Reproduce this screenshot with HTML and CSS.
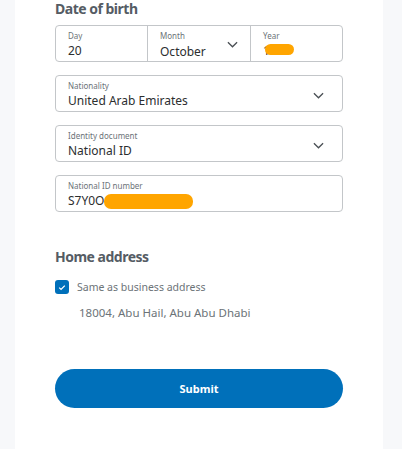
FILE: index.html
```html
<!DOCTYPE html>
<html lang="en">
<head>
  <meta charset="UTF-8" />
  <title>Personal details</title>
  <link rel="stylesheet" href="styles.css">
</head>
<body>
  <div class="card">
    <h3 class="section-title dob-title">Date of birth</h3>
    <div class="date-group">
      <div class="field date-day">
        <label>Day</label>
        <div class="value">20</div>
      </div>
      <div class="field date-month">
        <label>Month</label>
        <div class="value">October</div>
        <svg class="chevron" viewBox="0 0 12 7"><path d="M1 1l5 5 5-5" /></svg>
      </div>
      <div class="field date-year">
        <label>Year</label>
        <div class="value"><span class="digit">1</span><span class="mask mask-year"></span></div>
      </div>
    </div>

    <div class="field box">
      <label>Nationality</label>
      <div class="value">United Arab Emirates</div>
      <svg class="chevron" viewBox="0 0 12 7"><path d="M1 1l5 5 5-5" /></svg>
    </div>

    <div class="field box">
      <label>Identity document</label>
      <div class="value">National ID</div>
      <svg class="chevron" viewBox="0 0 12 7"><path d="M1 1l5 5 5-5" /></svg>
    </div>

    <div class="field box">
      <label>National ID number</label>
      <div class="value">S7Y0O<span class="mask mask-id"></span></div>
    </div>

    <h3 class="section-title home-title">Home address</h3>
    <div class="check-row">
      <span class="checkbox">
        <svg viewBox="0 0 10 8"><path d="M1.5 4.2l2.3 2.2L8.5 1.6" /></svg>
      </span>
      <span class="check-label">Same as business address</span>
    </div>
    <div class="address">18004, Abu Hail, Abu Abu Dhabi</div>

    <button class="submit">Submit</button>
  </div>
</body>
</html>
```

FILE: styles.css
```css
body {
  margin: 0;
  background: #f7f8fa;
  font-family: "Noto Sans", "Open Sans", sans-serif;
  color: #2c2e2f;
}
.card {
  background: white;
  margin: 0 19px 0 15px;
  padding: 0 40px 40px 40px;
  height: 449px;
  box-sizing: border-box;
}
.section-title {
  margin: 0;
  font-size: 14px;
  font-weight: 700;
  color: #555c64;
  letter-spacing: -0.5px;
}
.dob-title {
  line-height: 18px;
  margin-bottom: 7px;
}
.date-group {
  display: flex;
  height: 37px;
  border: 1px solid #c3c6c9;
  border-radius: 4px;
  box-sizing: border-box;
  margin-bottom: 13px;
}
.field {
  position: relative;
  padding: 5px 11px 0 12px;
  box-sizing: border-box;
}
.field label {
  display: block;
  font-size: 8px;
  line-height: 10px;
  color: #6c7378;
}
.field .value {
  font-size: 12px;
  line-height: 19px;
  color: #2c2e2f;
  display: flex;
  align-items: center;
}
.date-day {
  width: 92px;
  border-right: 1px solid #c3c6c9;
}
.date-month {
  width: 103px;
  border-right: 1px solid #c3c6c9;
}
.date-month .value {
  padding-top: 1px;
}
.date-year {
  flex: 1;
}
.chevron {
  position: absolute;
  right: 12px;
  top: 15px;
  width: 11px;
  height: 7px;
  fill: none;
  stroke: #4a4f54;
  stroke-width: 1.4;
}
.box {
  height: 37px;
  border: 1px solid #c3c6c9;
  border-radius: 4px;
  margin-bottom: 13px;
}
.box .chevron {
  right: 18px;
  top: 16px;
}
.mask {
  display: inline-block;
  background: #ffa500;
  border-radius: 7px;
}
.mask-year {
  width: 29px;
  height: 11px;
  margin-left: -5px;
  margin-top: -2px;
}
.mask-id {
  width: 89px;
  height: 15px;
  margin-top: 1px;
}
.home-title {
  margin-top: 36px;
  line-height: 18px;
  margin-bottom: 14px;
}
.check-row {
  display: flex;
  align-items: center;
  gap: 8px;
}
.checkbox {
  width: 14px;
  height: 14px;
  border-radius: 3px;
  background: #0070ba;
  display: flex;
  align-items: center;
  justify-content: center;
}
.checkbox svg {
  width: 8px;
  height: 7px;
  fill: none;
  stroke: white;
  stroke-width: 1.6;
}
.check-label {
  font-size: 10.5px;
  color: #6c7378;
}
.address {
  margin: 11px 0 0 24px;
  font-size: 11.5px;
  color: #6c7378;
}
.submit {
  display: block;
  width: 100%;
  height: 39px;
  margin-top: 49px;
  border: none;
  border-radius: 20px;
  background: #0070ba;
  color: white;
  font-family: "Noto Sans", "Open Sans", sans-serif;
  font-size: 11px;
  font-weight: 700;
}
```
